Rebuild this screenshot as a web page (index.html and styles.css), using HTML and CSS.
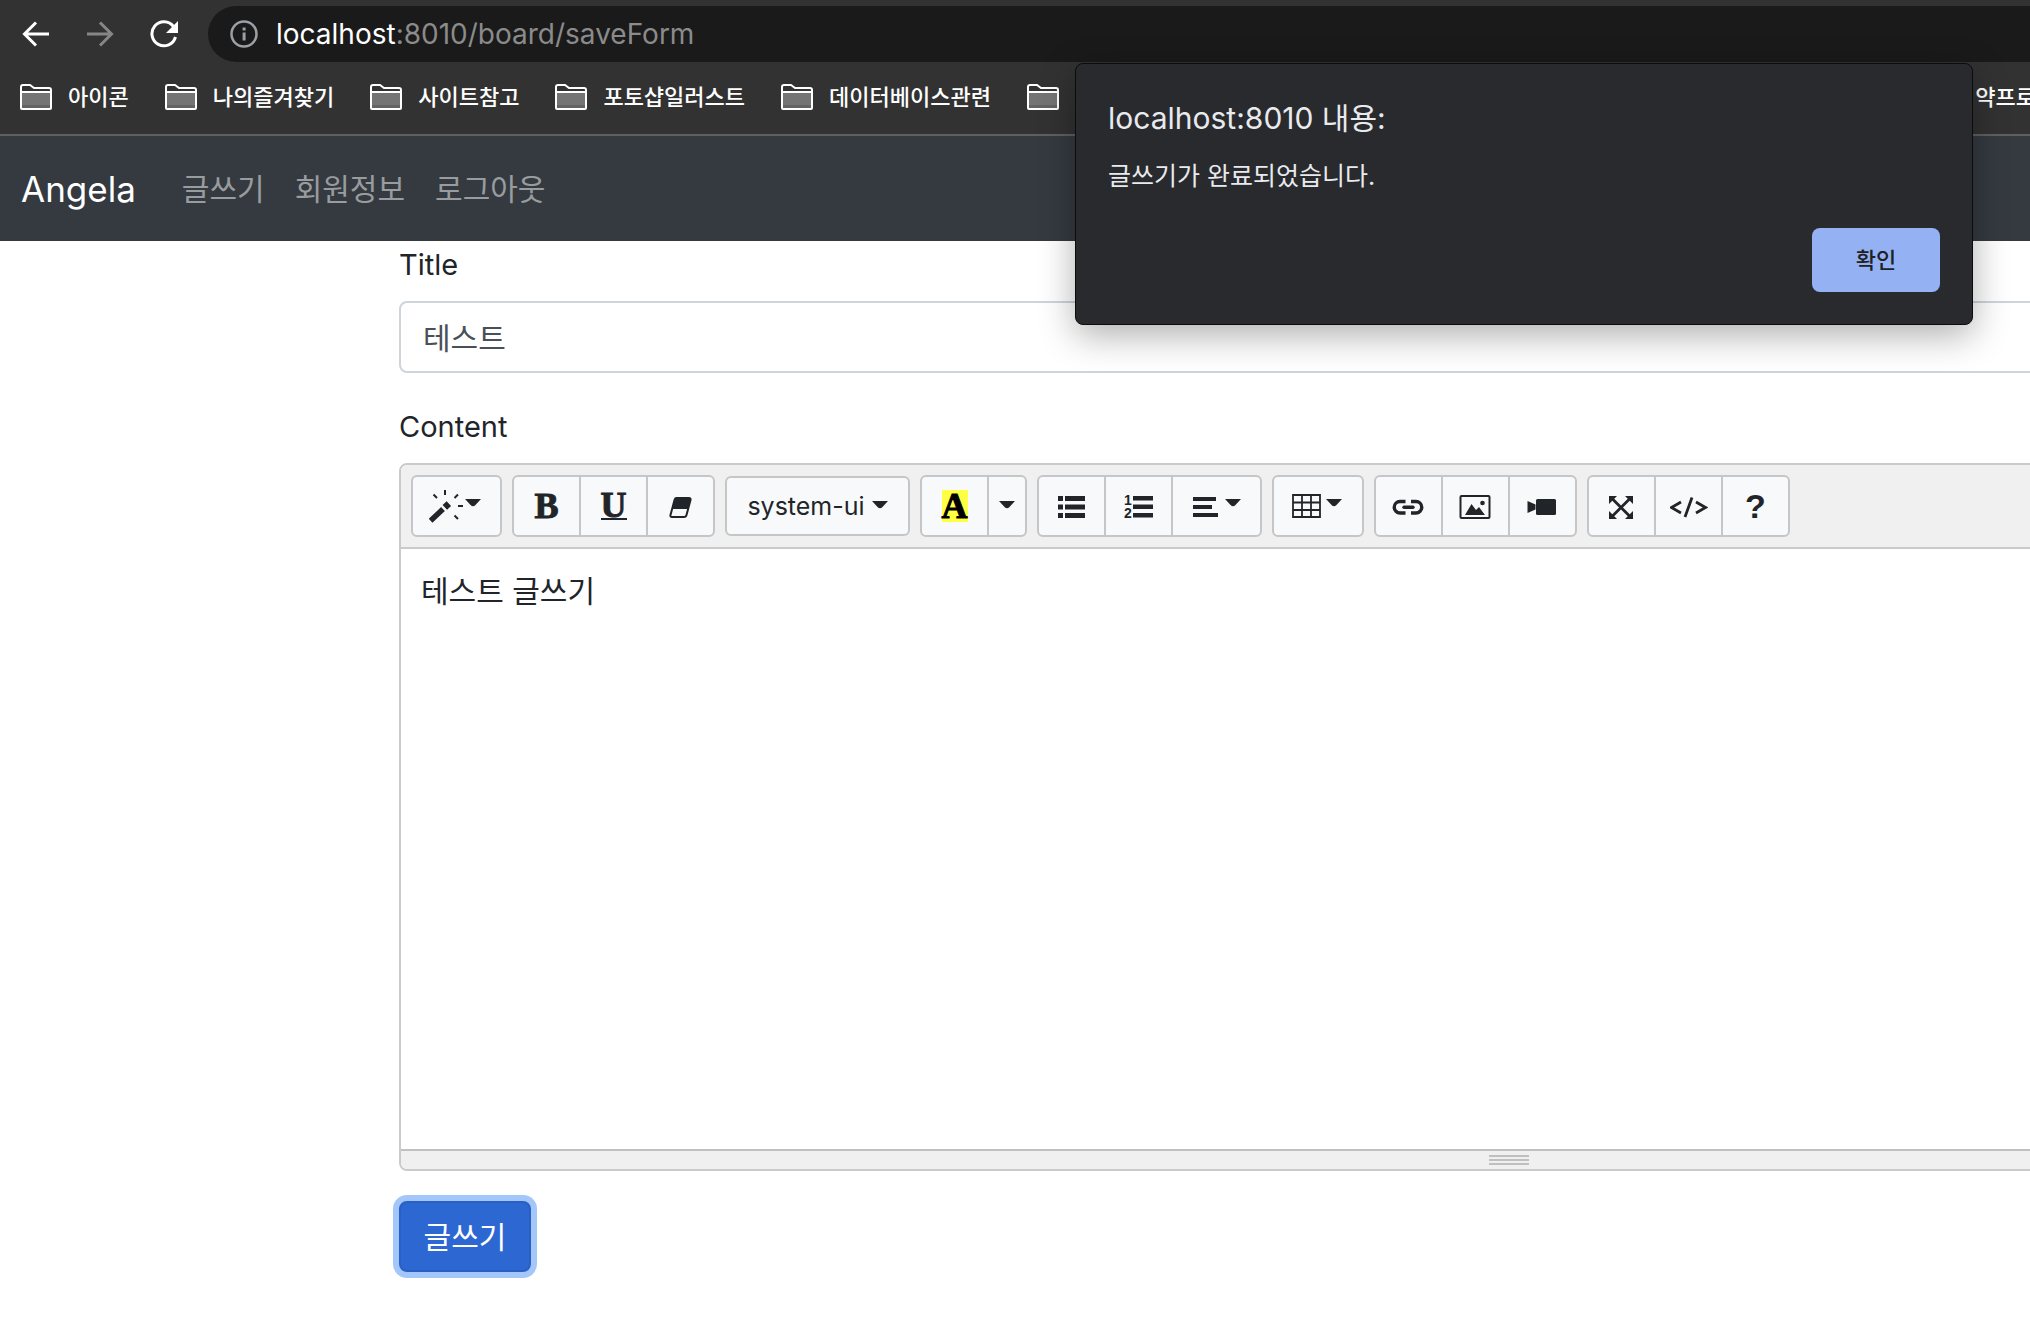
FILE: index.html
```html
<!DOCTYPE html>
<html lang="ko">
<head>
<meta charset="utf-8">
<title>saveForm</title>
<link rel="stylesheet" href="styles.css">
</head>
<body>
<svg class="defs" aria-hidden="true">
  <symbol id="folder" viewBox="0 0 32 26">
    <path d="M1 24V3q0-2 2-2h7l4 4h15q2 0 2 2v17z" fill="#323232"/>
    <path d="M2 9h28v15H2z" fill="#747474"/>
    <path d="M2 21h28v3H2z" fill="#646464"/>
    <path d="M1 24V3q0-2 2-2h7l4 3h15q2 0 2 2v18q0 1-1 1H2q-1 0-1-1zM1 8h30" fill="none" stroke="#fff" stroke-width="2"/>
  </symbol>
  <symbol id="caret" viewBox="0 0 16 8"><path d="M0 0h16L10 6.500q-2 1.500-4 0z"/></symbol>
</svg>

<header class="browser">
  <div class="address-row">
    <button class="tool" aria-label="뒤로"><svg width="28" height="28" viewBox="0 0 28 28"><path d="M27 14H3M14 2.500L2.500 14 14 25.500" fill="none" stroke="#fff" stroke-width="3"/></svg></button>
    <button class="tool" aria-label="앞으로"><svg width="28" height="28" viewBox="0 0 28 28"><path d="M1 14h24M14 2.500L25.500 14 14 25.500" fill="none" stroke="#868686" stroke-width="3"/></svg></button>
    <button class="tool" aria-label="새로고침"><svg width="28" height="28" viewBox="0 0 28 28"><path d="M23.500 6.500A12 12 0 1 0 25.500 17" fill="none" stroke="#fff" stroke-width="3"/><path d="M28 1v12H16z" fill="#fff"/></svg></button>
    <div class="omnibox">
      <svg width="28" height="28" viewBox="0 0 28 28"><circle cx="14" cy="14" r="12.500" fill="none" stroke="#9aa0a6" stroke-width="2.500"/><path d="M12.600 12.500h3v8h-3zM12.600 7.500h3v3h-3z" fill="#9aa0a6"/></svg>
      <span class="url"><span class="host">localhost</span>:8010/board/saveForm</span>
    </div>
  </div>
  <nav class="bookmarks" aria-label="북마크">
    <a href="#"><svg class="folder"><use href="#folder"/></svg>아이콘</a>
    <a href="#"><svg class="folder"><use href="#folder"/></svg>나의즐겨찾기</a>
    <a href="#"><svg class="folder"><use href="#folder"/></svg>사이트참고</a>
    <a href="#"><svg class="folder"><use href="#folder"/></svg>포토샵일러스트</a>
    <a href="#"><svg class="folder"><use href="#folder"/></svg>데이터베이스관련</a>
    <a href="#" aria-label="폴더"><svg class="folder"><use href="#folder"/></svg></a>
    <a class="last" href="#">약프로</a>
  </nav>
</header>

<nav class="navbar">
  <a class="brand" href="#">Angela</a>
  <a class="nav-link" href="#">글쓰기</a>
  <a class="nav-link" href="#">회원정보</a>
  <a class="nav-link" href="#">로그아웃</a>
</nav>

<main class="page">
  <form class="form">
    <label for="title">Title</label>
    <input class="title-input" id="title" type="text" value="테스트">
    <label for="content">Content</label>
    <div class="editor">
      <div class="toolbar">
        <div class="group">
          <button type="button" class="drop style" aria-label="스타일">
            <svg width="34" height="34" viewBox="0 0 34 34"><g transform="rotate(-43 2.500 30.500)"><path d="M1 28h17v5.500H1zM20.500 27.500h5.500v6.500h-5.500z"/></g><path d="M16 1v5M4.500 5.500L8 9M29 5.500L25.500 9M29 17h5M25.500 26.500L29 30" fill="none" stroke="#212529" stroke-width="2"/></svg>
            <svg class="caret"><use href="#caret"/></svg>
          </button>
        </div>
        <div class="group">
          <button type="button" class="serif">B</button>
          <button type="button" class="serif"><span class="under">U</span></button>
          <button type="button" aria-label="지우기"><svg class="icon" viewBox="1 0 36 36"><path d="M14 10h13q2 0 1.500 2l-4 15q-.5 2-2.500 2H10q-2 0-1.500-2l4-15q.5-2 1.500-2z" fill="none" stroke="#212529" stroke-width="2"/><path d="M14 10h13q2 0 1.500 2L26 21H10.200l2.300-9q.5-2 1.500-2z"/></svg></button>
        </div>
        <div class="group">
          <button type="button" class="font">system-ui<svg class="caret"><use href="#caret"/></svg></button>
        </div>
        <div class="group">
          <button type="button" class="serif"><span class="mark">A</span></button>
          <button type="button" class="narrow" aria-label="색상"><svg class="caret"><use href="#caret"/></svg></button>
        </div>
        <div class="group">
          <button type="button" aria-label="목록"><svg class="icon" viewBox="0 0 36 36"><path d="M4 8h5v5H4zM4 16.500h5v5H4zM4 25h5v5H4zM11 8h20v5H11zM11 16.500h20v5H11zM11 25h20v5H11z"/></svg></button>
          <button type="button" aria-label="번호 목록"><svg class="icon" viewBox="1 0 36 36"><path d="M13 8h20v4.500H13zM13 16.500h20v4.500H13zM13 25h20v4.500H13z"/><text class="digit" x="4" y="17">1</text><text class="digit" x="4" y="30">2</text></svg></button>
          <button type="button" class="drop align" aria-label="정렬">
            <svg width="26" height="24" viewBox="0 0 26 24"><path d="M0 3h23v4H0zM0 11h19v4H0zM0 19h25v4H0z"/></svg>
            <svg class="caret"><use href="#caret"/></svg>
          </button>
        </div>
        <div class="group">
          <button type="button" class="drop table" aria-label="표">
            <svg width="29" height="24" viewBox="0 0 29 24"><path d="M1 1h27v22H1zM10 1v22M19 1v22M1 8.500h27M1 16h27" fill="none" stroke="#212529" stroke-width="1.800"/></svg>
            <svg class="caret"><use href="#caret"/></svg>
          </button>
        </div>
        <div class="group">
          <button type="button" aria-label="링크"><svg class="icon" viewBox="1 0 36 36"><path d="M15.500 13.500H10a5.700 5.700 0 0 0 0 11.500h5.500M21 13.500h5a5.700 5.700 0 0 1 0 11.500h-5" fill="none" stroke="#212529" stroke-width="3.400"/><path d="M14 19.200h9" fill="none" stroke="#212529" stroke-width="3.400" stroke-linecap="round"/></svg></button>
          <button type="button" aria-label="그림"><svg class="icon" viewBox="1 0 36 36"><rect x="3.500" y="8" width="29" height="22" rx="1" fill="none" stroke="#212529" stroke-width="2"/><circle cx="25.500" cy="15" r="2.300"/><path d="M8 27l6.500-11 4.500 6 3-3 6 8z"/></svg></button>
          <button type="button" aria-label="동영상"><svg class="icon" viewBox="1 0 36 36"><rect x="12" y="11" width="20" height="16" rx="1.500"/><path d="M3.500 13l8 3.500v5l-8 3.500z"/></svg></button>
        </div>
        <div class="group">
          <button type="button" aria-label="전체 화면"><svg class="icon" viewBox="1 0 36 36"><path d="M9 10.500L27 28.500M27 10.500L9 28.500" stroke="#212529" stroke-width="2.800"/><path d="M6 8h8l-8 8zM30 8h-8l8 8zM6 31h8l-8-8zM30 31h-8l8-8z"/></svg></button>
          <button type="button" aria-label="코드 보기"><svg class="icon wide" viewBox="0 0 38 36"><path d="M11 14L1.500 19.500 11 25M26 14l9.500 5.500L26 25M22 9.500l-7 19.500" fill="none" stroke="#212529" stroke-width="2.800"/></svg></button>
          <button type="button" class="help">?</button>
        </div>
      </div>
      <textarea class="editable" id="content">테스트 글쓰기</textarea>
      <div class="statusbar"><i></i><i></i><i></i></div>
    </div>
    <button class="submit" type="button">글쓰기</button>
  </form>
</main>

<div class="alert" role="alertdialog" aria-labelledby="alert-title">
  <h1 id="alert-title">localhost:8010 내용:</h1>
  <p>글쓰기가 완료되었습니다.</p>
  <button type="button">확인</button>
</div>
</body>
</html>
```
FILE: styles.css
```css
* { box-sizing: border-box; }
body {
  margin: 0;
  position: relative;
  overflow: hidden;
  background: #fff;
  color: #212529;
  font: 30px/46px Inter, "Noto Sans CJK KR", sans-serif;
}
button, input, textarea { font: inherit; color: inherit; margin: 0; padding: 0; }
a { color: inherit; text-decoration: none; }
svg { display: block; flex: none; }
.defs { position: absolute; width: 0; height: 0; }

.browser {
  background: #323232;
  border-bottom: 2px solid #606060;
  color: #fff;
}
.address-row {
  display: flex;
  align-items: center;
  padding: 6px 0 0 22px;
}
.tool { border: 0; background: none; margin-right: 36px; }
.tool:nth-child(3) { margin-right: 30px; }
.omnibox {
  flex: 1;
  height: 56px;
  display: flex;
  align-items: center;
  gap: 18px;
  padding-left: 22px;
  border-radius: 28px 0 0 28px;
  background: #1a1a1a;
}
.url { font-size: 28px; color: #8b8b8b; }
.host { color: #fff; }
.bookmarks {
  display: flex;
  align-items: center;
  gap: 35px;
  height: 72px;
  padding: 0 0 2px 19px;
  overflow: hidden;
  white-space: nowrap;
  font-size: 22px;
  font-weight: 500;
}
.bookmarks a { display: flex; align-items: center; gap: 15px; }
.bookmarks .last { margin: 0 -6px 0 auto; }
.folder { width: 34px; height: 26px; }

.navbar {
  display: flex;
  align-items: center;
  gap: 30px;
  height: 105px;
  padding-left: 21px;
  background: #343a40;
  color: #999c9f;
}
.brand { margin-right: 16px; font-size: 35px; color: #fff; }

.page { padding-left: 399px; }
/* the form is wider than the window and is clipped on the right */
.form {
  display: flex;
  flex-direction: column;
  align-items: stretch;
  margin-right: -589px;
}
.form label { line-height: 48px; margin-bottom: 12px; font-size: 29px; }
.title-input {
  height: 72px;
  margin-bottom: 30px;
  padding: 0 22px 2px;
  border: 2px solid #ced4da;
  border-radius: 8px;
  background: #fff;
  color: #495057;
}
.editor {
  border: 2px solid #cacaca;
  border-radius: 8px;
  overflow: hidden;
}
.toolbar {
  display: flex;
  align-items: center;
  gap: 10px;
  height: 84px;
  padding: 0 10px;
  background: #f0f0f0;
  border-bottom: 2px solid #cacaca;
}
.group { display: flex; }
.group button {
  display: flex;
  align-items: center;
  justify-content: center;
  width: 69px;
  height: 62px;
  border: 2px solid #c5c6c7;
  background: #f8f9fa;
}
.group button + button { margin-left: -2px; }
.group button:first-child { border-radius: 6px 0 0 6px; }
.group button:last-child { border-radius: 0 6px 6px 0; }
.group button:only-child { border-radius: 6px; }
.group svg { fill: #212529; }
.group .drop { width: 91px; gap: 2px; }
.group .style { padding-right: 4px; }
.group .align { gap: 6px; }
.group .table { gap: 5px; width: 92px; padding-right: 2px; }
.group .narrow { width: 40px; }
.group .font { width: 185px; height: 60px; gap: 7px; font-size: 25px; }
.group .serif {
  font: bold 36px/32px "Liberation Serif", serif;
  -webkit-text-stroke: 1px currentColor;
}
.group .help { font: bold 34px/36px "Liberation Sans", sans-serif; }
.under { border-bottom: 2px solid #212529; line-height: 26px; }
.mark { background: #ff4; color: #000; }
.icon { width: 36px; height: 36px; }
.wide { width: 38px; }
.digit { font: bold 14px "Liberation Sans", sans-serif; }
.caret { width: 16px; height: 8px; margin-bottom: 3px; }
.drop .caret { margin-bottom: 7px; }
.editable {
  display: block;
  width: 100%;
  height: 600px;
  padding: 19px 20px;
  border: 0;
  outline: 0;
  resize: none;
  background: #fff;
}
.statusbar {
  display: flex;
  flex-direction: column;
  align-items: center;
  gap: 2px;
  height: 20px;
  padding-top: 4px;
  border-top: 2px solid #c0c0c0;
  background: #f0f0f0;
}
.statusbar i { width: 40px; height: 2px; background: #c0c0c0; }
.submit {
  align-self: flex-start;
  width: 132px;
  height: 71px;
  margin: 30px 0 52px;
  border: 2px solid #2a5fc4;
  border-radius: 8px;
  background: #2c67d2;
  color: #fff;
  box-shadow: 0 0 0 6px #a3c6fb;
}

.alert {
  position: absolute;
  top: 63px;
  right: 57px;
  width: 898px;
  height: 262px;
  display: flex;
  flex-direction: column;
  padding: 32px;
  border: 1px solid #0c0c0d;
  border-radius: 8px;
  background: #292a2d;
  color: #e8eaed;
  box-shadow: 0 10px 36px rgba(0, 0, 0, .32);
}
.alert h1 { margin: 0; font-size: 30px; font-weight: 400; line-height: 44px; }
.alert p { margin: 16px 0 0; font-size: 25px; line-height: 40px; }
.alert button {
  align-self: flex-end;
  width: 128px;
  height: 64px;
  margin-top: auto;
  border: 0;
  border-radius: 8px;
  background: #94b2f3;
  color: #202124;
  font-size: 22px;
  font-weight: 500;
}
```
